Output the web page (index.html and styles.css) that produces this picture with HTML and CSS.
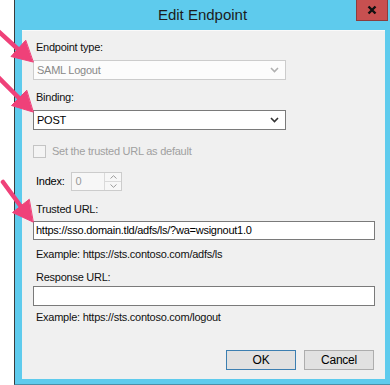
FILE: index.html
```html
<!DOCTYPE html>
<html lang="en">

<head>
    <meta charset="UTF-8">
    <title>Edit Endpoint</title>
    <link rel="stylesheet" href="styles.css">
</head>

<body>
    <div class="window">
        <div class="titlebar">
            <span></span>
            <span class="title">Edit Endpoint</span>
            <button class="close" type="button" aria-label="Close">
                <svg width="12" height="10" viewBox="0 0 12 10">
                    <path d="M2.5 1.5 L9.5 8.5 M9.5 1.5 L2.5 8.5" stroke="#111" stroke-width="2.4" fill="none"/>
                </svg>
            </button>
        </div>

        <div class="client">
            <div class="label">Endpoint type:</div>
            <div class="combo disabled">
                <span>SAML Logout</span>
                <svg class="chevron" width="9" height="6" viewBox="0 0 9 6">
                    <path d="M1 1 L4.5 4.5 L8 1" stroke="#b0b0b0" stroke-width="1.6" fill="none"/>
                </svg>
            </div>

            <div class="label label-binding">Binding:</div>
            <div class="combo">
                <span>POST</span>
                <svg class="chevron" width="9" height="6" viewBox="0 0 9 6">
                    <path d="M1 1 L4.5 4.5 L8 1" stroke="#333" stroke-width="1.6" fill="none"/>
                </svg>
            </div>

            <div class="check-row">
                <span class="checkbox"></span>
                <span class="muted">Set the trusted URL as default</span>
            </div>

            <div class="index-row">
                <span class="index-label">Index:</span>
                <div class="spinner">
                    <span class="spin-value">0</span>
                    <div class="spin-buttons">
                        <span class="spin-btn">
                            <svg width="7" height="4" viewBox="0 0 7 4"><path d="M0.5 3.5 L3.5 0.7 L6.5 3.5" stroke="#9a9a9a" fill="none"/></svg>
                        </span>
                        <span class="spin-btn">
                            <svg width="7" height="4" viewBox="0 0 7 4"><path d="M0.5 0.5 L3.5 3.3 L6.5 0.5" stroke="#9a9a9a" fill="none"/></svg>
                        </span>
                    </div>
                </div>
            </div>

            <div class="label label-trusted">Trusted URL:</div>
            <div class="textbox">https://sso.domain.tld/adfs/ls/?wa=wsignout1.0</div>
            <div class="label hint hint-first">Example: https://sts.contoso.com/adfs/ls</div>

            <div class="label label-response">Response URL:</div>
            <div class="textbox textbox-tall"></div>
            <div class="label hint hint-second">Example: https://sts.contoso.com/logout</div>

            <div class="buttons">
                <button class="btn btn-default" type="button">OK</button>
                <button class="btn" type="button">Cancel</button>
            </div>
        </div>
    </div>

    <!-- callout arrows drawn over the dialog -->
    <svg class="arrows" width="60" height="385" viewBox="0 0 60 385">
        <g stroke="#ef4179" stroke-width="4.5" stroke-linecap="round" fill="#ef4179">
            <line x1="-2" y1="31" x2="20" y2="51"/>
            <polygon points="33,62 11,56.5 25.5,40.5" stroke-width="1" stroke-linejoin="round"/>
            <line x1="-2" y1="77" x2="21" y2="100"/>
            <polygon points="33,112 11.5,105.5 26.5,90.5" stroke-width="1" stroke-linejoin="round"/>
            <line x1="3" y1="182" x2="22" y2="208"/>
            <polygon points="33,222 12.5,212.5 29,199.5" stroke-width="1" stroke-linejoin="round"/>
        </g>
    </svg>
</body>

</html>
```

FILE: styles.css
```css
/* Page and window frame */
body {
    margin: 0;
    background-color: #fff;
    font-family: 'Liberation Sans', Arial, sans-serif;
    font-size: 11px;
    line-height: 13px;
    letter-spacing: -0.25px;
    color: #000;
    position: relative;
    height: 385px;
    overflow: hidden;
}

.window {
    margin-left: 14px;
    height: 384px;
    border-left: 1px solid #3b3b3b;
    border-bottom: 1px solid #4a8fa8;
    background-color: #5ecbed;
    display: flex;
    flex-direction: column;
}

.titlebar {
    height: 30px;
    display: grid;
    grid-template-columns: 1fr auto 1fr;
    padding-right: 2px;
}

.title {
    align-self: center;
    font-size: 15px;
    line-height: 18px;
    letter-spacing: 0;
    color: #1c1c1c;
    padding-left: 2px;
}

.close {
    justify-self: end;
    align-self: start;
    width: 32px;
    height: 21px;
    padding: 0;
    border: 1px solid #8c3d3d;
    border-top: none;
    background-color: #c75050;
    display: flex;
    align-items: center;
    justify-content: center;
}

/* Dialog body */
.client {
    margin: 0 5px 5px 7px;
    flex: 1;
    background-color: #f0f0f0;
    border-top: 1px solid #fafafa;
    padding: 10px 10px 0 11px;
    display: flex;
    flex-direction: column;
}

.label {
    padding-left: 3px;
    color: #111;
}

.label-binding {
    margin-top: 11px;
}

.label-trusted {
    margin-top: 12px;
}

.label-response {
    margin-top: 10px;
}

.combo {
    margin-top: 6px;
    width: 253px;
    height: 20px;
    box-sizing: border-box;
    border: 1px solid #7a7a7a;
    background-color: #fff;
    display: flex;
    align-items: center;
    justify-content: space-between;
    padding: 0 6px 0 3px;
}

.combo.disabled {
    border-color: #cccccc;
    background-color: #fcfcfc;
    color: #888;
}

.chevron {
    display: block;
}

.check-row {
    margin-top: 15px;
    height: 13px;
    display: flex;
    align-items: center;
    gap: 6px;
}

.checkbox {
    width: 11px;
    height: 11px;
    border: 1px solid #c4c4c4;
    background-color: #f4f4f4;
}

.muted {
    color: #a0a0a0;
}

.index-row {
    margin-top: 14px;
    display: flex;
    align-items: center;
    gap: 7px;
    padding-left: 3px;
}

.spinner {
    width: 51px;
    height: 19px;
    box-sizing: border-box;
    border: 1px solid #cccccc;
    background-color: #f7f7f7;
    display: flex;
    justify-content: space-between;
}

.spin-value {
    color: #9a9a9a;
    padding: 2px 0 0 3px;
}

.spin-buttons {
    width: 16px;
    display: flex;
    flex-direction: column;
    border-left: 1px solid #dadada;
}

.spin-btn {
    flex: 1;
    display: flex;
    align-items: center;
    justify-content: center;
}

.spin-btn + .spin-btn {
    border-top: 1px solid #dadada;
}

.textbox {
    margin-top: 5px;
    width: 342px;
    height: 19px;
    box-sizing: border-box;
    border: 1px solid #7a7a7a;
    background-color: #fff;
    padding: 2px 0 0 2px;
}

.textbox-tall {
    margin-top: 2px;
    height: 20px;
}

.hint-first {
    margin-top: 8px;
}

.hint-second {
    margin-top: 5px;
}

.buttons {
    margin-top: 26px;
    display: flex;
    justify-content: flex-end;
    gap: 8px;
    padding-right: 1px;
}

.btn {
    width: 70px;
    height: 20px;
    padding: 0;
    border: 1px solid #adadad;
    background-color: #e1e1e1;
    font-family: 'Liberation Sans', Arial, sans-serif;
    font-size: 12px;
    letter-spacing: -0.25px;
    color: #000;
}

.btn-default {
    border-color: #3c7fb1;
}

/* Annotation arrows */
.arrows {
    position: absolute;
    left: 0;
    top: 0;
    pointer-events: none;
}
```
